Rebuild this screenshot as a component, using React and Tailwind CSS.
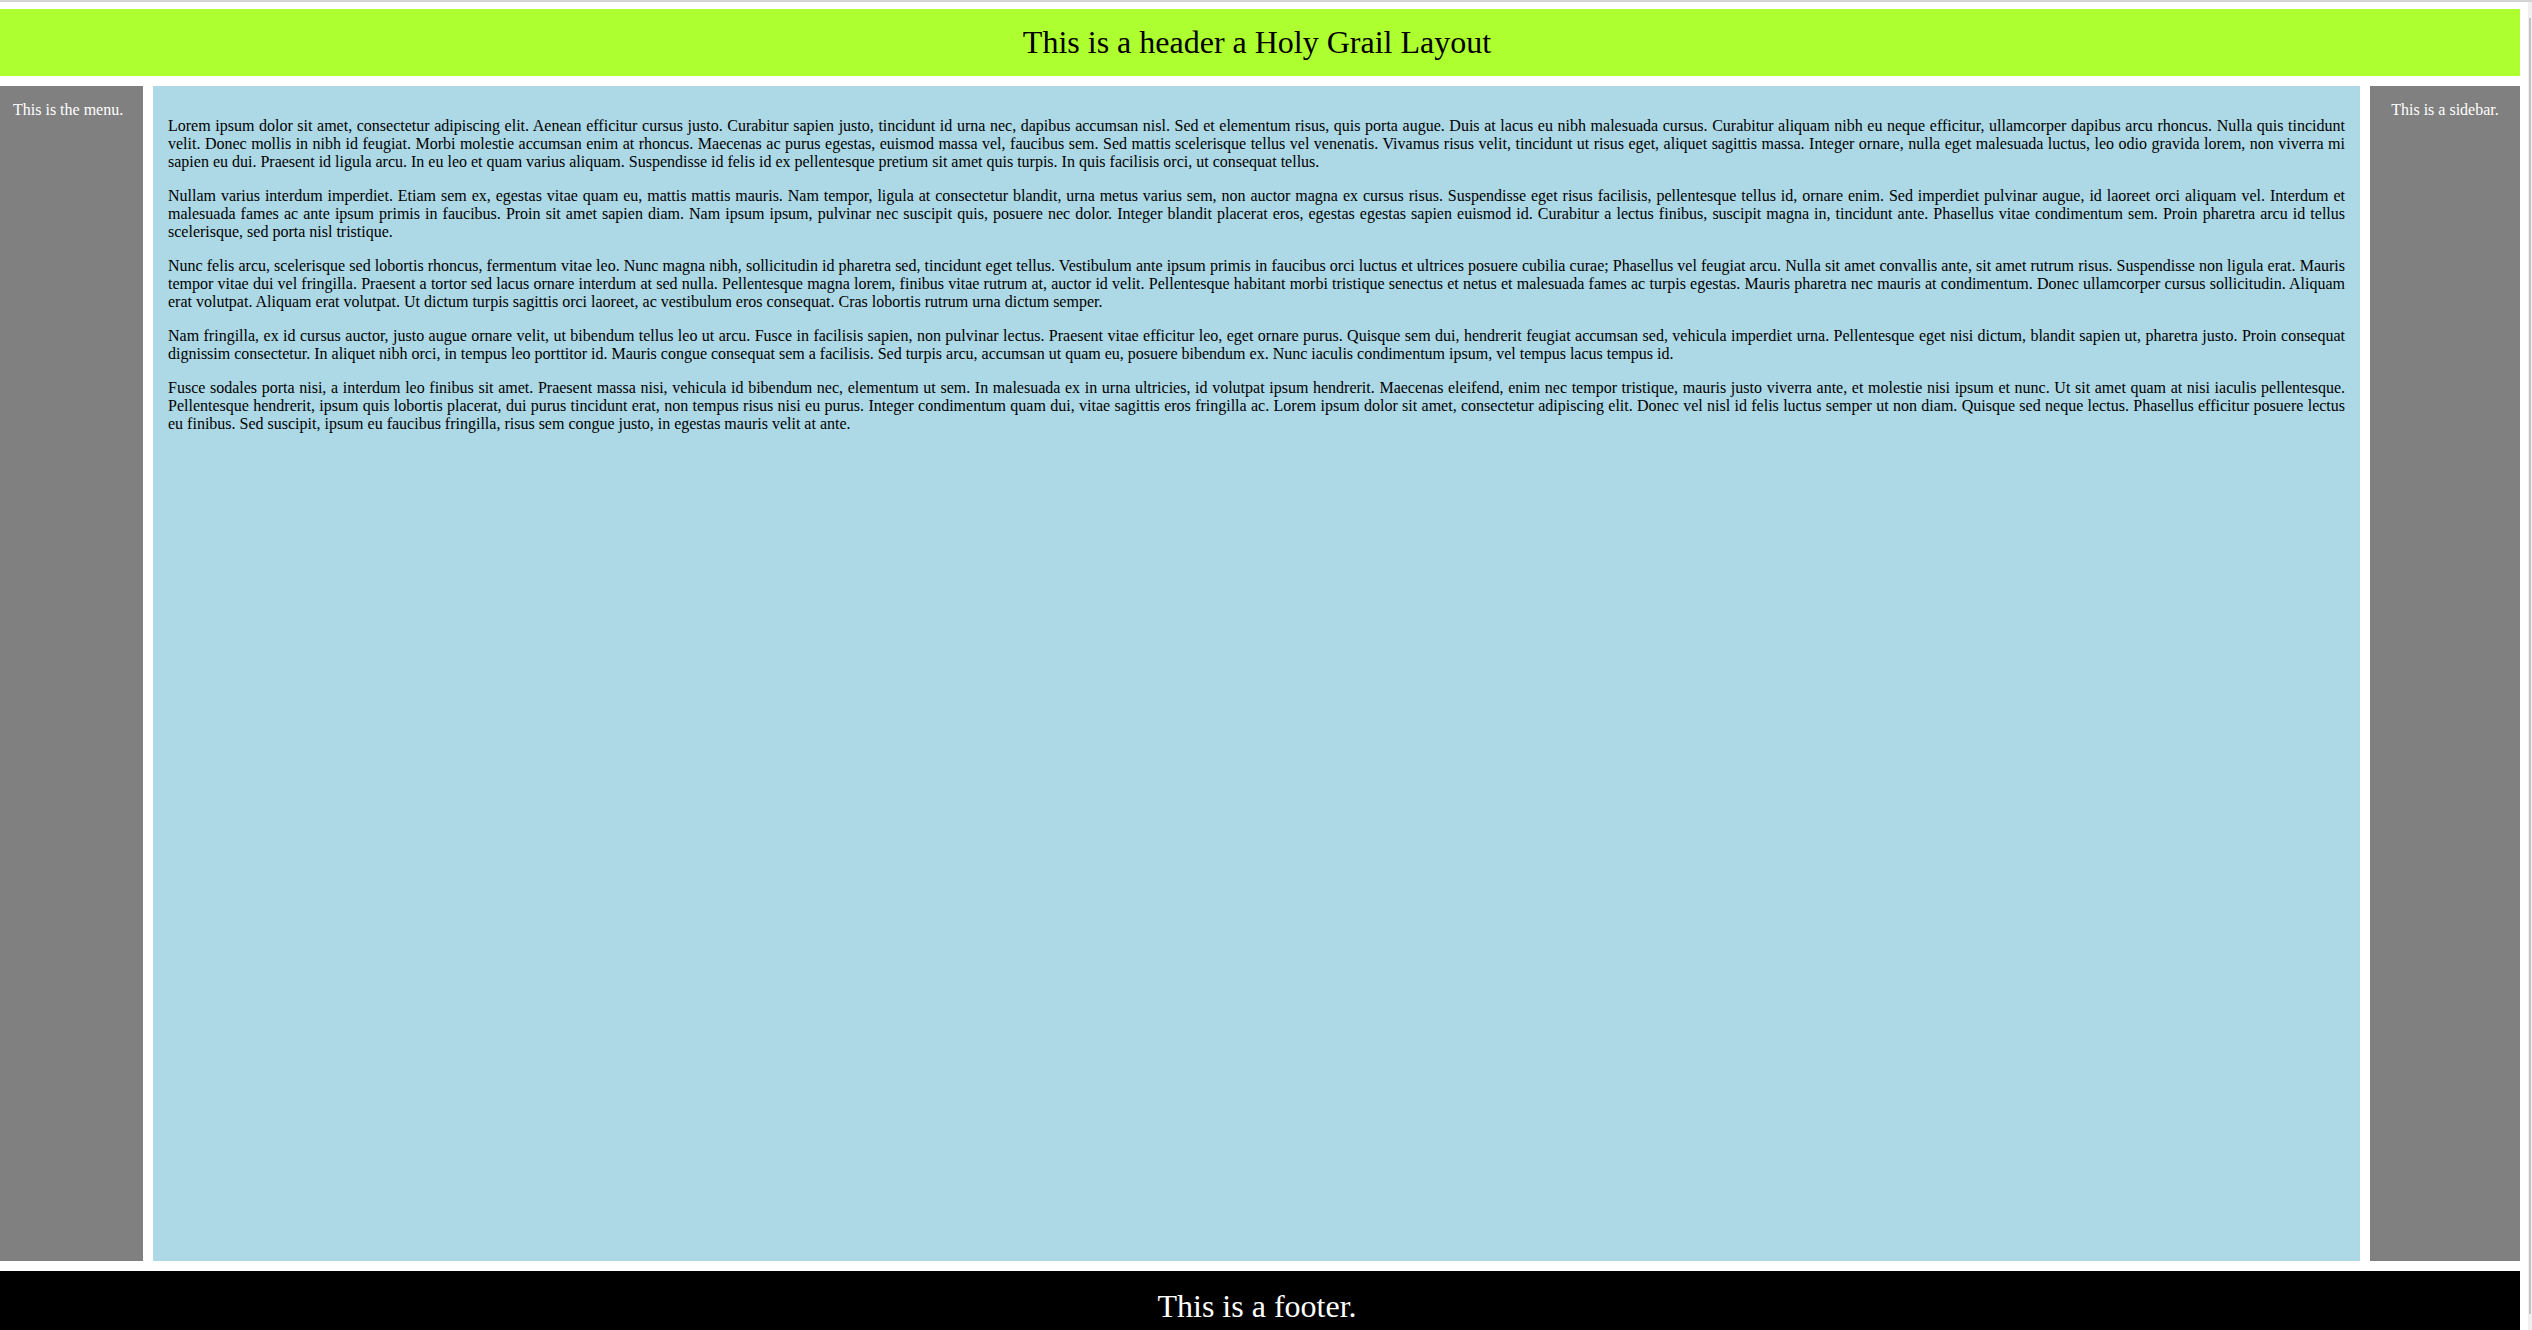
import React from "react";

const paragraphs = [
  "Lorem ipsum dolor sit amet, consectetur adipiscing elit. Aenean efficitur cursus justo. Curabitur sapien justo, tincidunt id urna nec, dapibus accumsan nisl. Sed et elementum risus, quis porta augue. Duis at lacus eu nibh malesuada cursus. Curabitur aliquam nibh eu neque efficitur, ullamcorper dapibus arcu rhoncus. Nulla quis tincidunt velit. Donec mollis in nibh id feugiat. Morbi molestie accumsan enim at rhoncus. Maecenas ac purus egestas, euismod massa vel, faucibus sem. Sed mattis scelerisque tellus vel venenatis. Vivamus risus velit, tincidunt ut risus eget, aliquet sagittis massa. Integer ornare, nulla eget malesuada luctus, leo odio gravida lorem, non viverra mi sapien eu dui. Praesent id ligula arcu. In eu leo et quam varius aliquam. Suspendisse id felis id ex pellentesque pretium sit amet quis turpis. In quis facilisis orci, ut consequat tellus.",
  "Nullam varius interdum imperdiet. Etiam sem ex, egestas vitae quam eu, mattis mattis mauris. Nam tempor, ligula at consectetur blandit, urna metus varius sem, non auctor magna ex cursus risus. Suspendisse eget risus facilisis, pellentesque tellus id, ornare enim. Sed imperdiet pulvinar augue, id laoreet orci aliquam vel. Interdum et malesuada fames ac ante ipsum primis in faucibus. Proin sit amet sapien diam. Nam ipsum ipsum, pulvinar nec suscipit quis, posuere nec dolor. Integer blandit placerat eros, egestas egestas sapien euismod id. Curabitur a lectus finibus, suscipit magna in, tincidunt ante. Phasellus vitae condimentum sem. Proin pharetra arcu id tellus scelerisque, sed porta nisl tristique.",
  "Nunc felis arcu, scelerisque sed lobortis rhoncus, fermentum vitae leo. Nunc magna nibh, sollicitudin id pharetra sed, tincidunt eget tellus. Vestibulum ante ipsum primis in faucibus orci luctus et ultrices posuere cubilia curae; Phasellus vel feugiat arcu. Nulla sit amet convallis ante, sit amet rutrum risus. Suspendisse non ligula erat. Mauris tempor vitae dui vel fringilla. Praesent a tortor sed lacus ornare interdum at sed nulla. Pellentesque magna lorem, finibus vitae rutrum at, auctor id velit. Pellentesque habitant morbi tristique senectus et netus et malesuada fames ac turpis egestas. Mauris pharetra nec mauris at condimentum. Donec ullamcorper cursus sollicitudin. Aliquam erat volutpat. Aliquam erat volutpat. Ut dictum turpis sagittis orci laoreet, ac vestibulum eros consequat. Cras lobortis rutrum urna dictum semper.",
  "Nam fringilla, ex id cursus auctor, justo augue ornare velit, ut bibendum tellus leo ut arcu. Fusce in facilisis sapien, non pulvinar lectus. Praesent vitae efficitur leo, eget ornare purus. Quisque sem dui, hendrerit feugiat accumsan sed, vehicula imperdiet urna. Pellentesque eget nisi dictum, blandit sapien ut, pharetra justo. Proin consequat dignissim consectetur. In aliquet nibh orci, in tempus leo porttitor id. Mauris congue consequat sem a facilisis. Sed turpis arcu, accumsan ut quam eu, posuere bibendum ex. Nunc iaculis condimentum ipsum, vel tempus lacus tempus id.",
  "Fusce sodales porta nisi, a interdum leo finibus sit amet. Praesent massa nisi, vehicula id bibendum nec, elementum ut sem. In malesuada ex in urna ultricies, id volutpat ipsum hendrerit. Maecenas eleifend, enim nec tempor tristique, mauris justo viverra ante, et molestie nisi ipsum et nunc. Ut sit amet quam at nisi iaculis pellentesque. Pellentesque hendrerit, ipsum quis lobortis placerat, dui purus tincidunt erat, non tempus risus nisi eu purus. Integer condimentum quam dui, vitae sagittis eros fringilla ac. Lorem ipsum dolor sit amet, consectetur adipiscing elit. Donec vel nisl id felis luctus semper ut non diam. Quisque sed neque lectus. Phasellus efficitur posuere lectus eu finibus. Sed suscipit, ipsum eu faucibus fringilla, risus sem congue justo, in egestas mauris velit at ante.",
];

export default function App() {
  return (
    <div className="h-[1330px] w-[2532px] overflow-hidden bg-white flex flex-col font-['Liberation_Serif','Times_New_Roman',serif]">
      <div className="h-[2px] shrink-0 bg-[#d4d4d4]" />
      <div className="h-[1328px] shrink-0 flex overflow-hidden">
        <div className="w-[2520px] shrink-0 pt-[7px] grid grid-cols-[143px_1fr_150px] grid-rows-[67px_1175px_67px] gap-[10px]">
          <header className="col-span-3 bg-[#adff2f] flex items-center justify-center pr-[6px]">
            <h1 className="text-[32px] font-normal leading-[1.15] text-black">
              This is a header a Holy Grail Layout
            </h1>
          </header>
          <nav className="bg-[#808080] pt-[15px] pl-[13px]">
            <p className="text-[16px] leading-[18px] text-white">This is the menu.</p>
          </nav>
          <main className="bg-[#add8e6] px-[15px] pt-[31px] flex flex-col gap-[16px]">
            {paragraphs.map((t, i) => (
              <p key={i} className="text-[16px] leading-[18px] text-black text-justify">
                {t}
              </p>
            ))}
          </main>
          <aside className="bg-[#808080] pt-[15px] text-center">
            <p className="text-[16px] leading-[18px] text-white">This is a sidebar.</p>
          </aside>
          <footer className="col-span-3 bg-black flex items-center justify-center pr-[6px] pt-[3px]">
            <p className="text-[32px] leading-[1.15] text-white">This is a footer.</p>
          </footer>
        </div>
        <div className="w-[8px] shrink-0" />
        <div className="w-[4px] shrink-0 bg-[#f0f0f0] pt-[16px]">
          <div className="ml-[1px] w-[2px] h-[1296px] bg-[#c1c1c1]" />
        </div>
      </div>
    </div>
  );
}
